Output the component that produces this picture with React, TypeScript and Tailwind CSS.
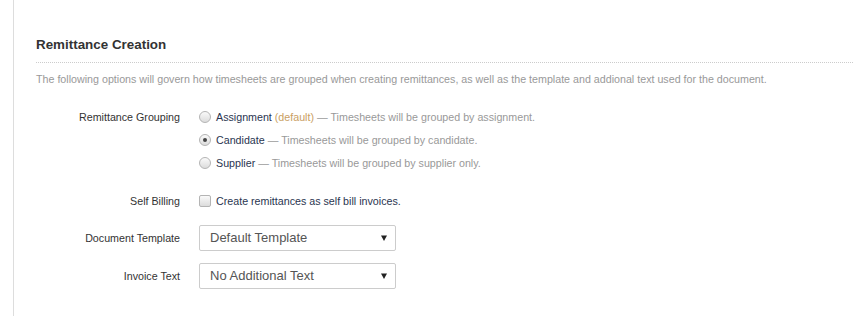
import React from "react";

const font = { fontFamily: '"Liberation Sans", Arial, sans-serif' };

function Radio({ checked }: { checked?: boolean }) {
  return (
    <span className="flex h-[12px] w-[12px] shrink-0 items-center justify-center rounded-full border border-[#b4b4b4] bg-gradient-to-b from-[#fafafa] to-[#dcdcdc]">
      {checked && <span className="h-[4px] w-[4px] rounded-full bg-[#444]" />}
    </span>
  );
}

function Checkbox() {
  return (
    <span className="block h-[12px] w-[12px] shrink-0 rounded-[2px] border border-[#b4b4b4] bg-gradient-to-b from-[#fafafa] to-[#dcdcdc]" />
  );
}

function Select({ value }: { value: string }) {
  return (
    <div className="flex h-[26px] w-[197px] items-center justify-between rounded-[2px] border border-[#cccccc] bg-white pl-[10px] pr-[8px]">
      <span className="text-[13px] leading-[16px] text-[#555]">{value}</span>
      <svg width="6" height="6" viewBox="0 0 6 6">
        <path d="M0 0.5 H6 L3 6 Z" fill="#222" />
      </svg>
    </div>
  );
}

export default function App() {
  return (
    <div className="h-[316px] w-[853px] overflow-hidden bg-white" style={font}>
      <div className="ml-[13px] h-full border-l border-[#dddddd] pl-[22px] pt-[36px]">
        <h2 className="text-[13.4px] font-bold leading-[18px] text-[#333]">Remittance Creation</h2>
        <div className="mt-[8px] border-b border-dotted border-[#cccccc]" />
        <p className="mt-[8px] text-[10.7px] leading-[16px] text-[#999]">
          The following options will govern how timesheets are grouped when creating remittances, as well as the template and addional text used for the document.
        </p>

        <div className="mt-[22px] flex text-[10.7px] leading-[16px]">
          <div className="w-[144px] shrink-0 text-right text-[#333]">Remittance Grouping</div>
          <div className="ml-[19px] flex flex-col gap-[7px]">
            <div className="flex items-center gap-[5px]">
              <Radio />
              <span className="text-[#2a3550]">
                Assignment <span className="text-[#c9a063]">(default)</span>{" "}
                <span className="text-[#999]">— Timesheets will be grouped by assignment.</span>
              </span>
            </div>
            <div className="flex items-center gap-[5px]">
              <Radio checked />
              <span className="text-[#2a3550]">
                Candidate <span className="text-[#999]">— Timesheets will be grouped by candidate.</span>
              </span>
            </div>
            <div className="flex items-center gap-[5px]">
              <Radio />
              <span className="text-[#2a3550]">
                Supplier <span className="text-[#999]">— Timesheets will be grouped by supplier only.</span>
              </span>
            </div>
          </div>
        </div>

        <div className="mt-[22px] flex text-[10.7px] leading-[16px]">
          <div className="w-[144px] shrink-0 text-right text-[#333]">Self Billing</div>
          <div className="ml-[19px] flex items-center gap-[5px]">
            <Checkbox />
            <span className="text-[#2a3550]">Create remittances as self bill invoices.</span>
          </div>
        </div>

        <div className="mt-[16px] flex items-center text-[10.7px] leading-[16px]">
          <div className="w-[144px] shrink-0 text-right text-[#333]">Document Template</div>
          <div className="ml-[19px]">
            <Select value="Default Template" />
          </div>
        </div>

        <div className="mt-[12px] flex items-center text-[10.7px] leading-[16px]">
          <div className="w-[144px] shrink-0 text-right text-[#333]">Invoice Text</div>
          <div className="ml-[19px]">
            <Select value="No Additional Text" />
          </div>
        </div>
      </div>
    </div>
  );
}
